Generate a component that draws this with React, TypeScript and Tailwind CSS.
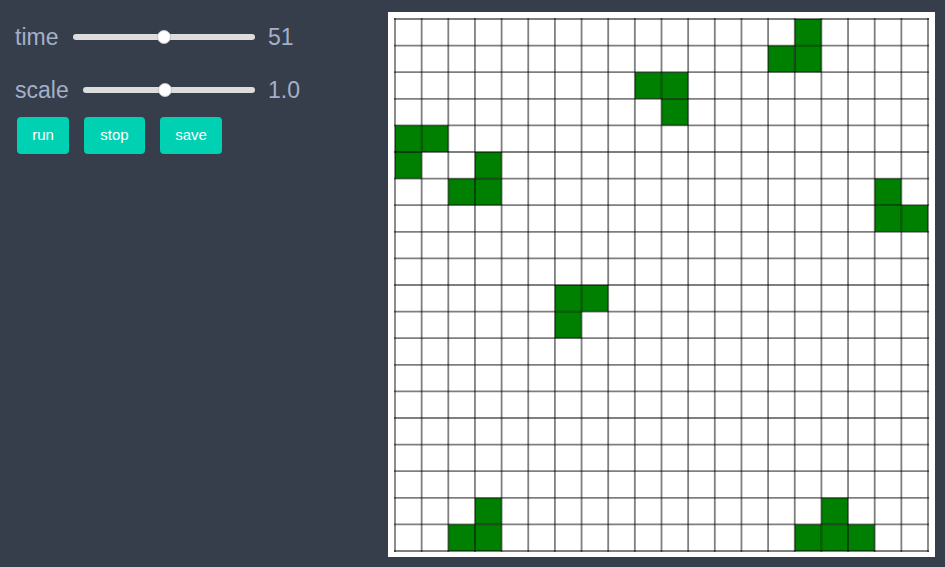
import React from "react";

const ON: [number, number][] = [
  [0, 15],
  [1, 14], [1, 15],
  [2, 9], [2, 10],
  [3, 10],
  [4, 0], [4, 1],
  [5, 0], [5, 3],
  [6, 2], [6, 3], [6, 18],
  [7, 18], [7, 19],
  [10, 6], [10, 7],
  [11, 6],
  [18, 3], [18, 16],
  [19, 2], [19, 3], [19, 15], [19, 16], [19, 17],
];

function Slider({ pct }: { pct: number }) {
  return (
    <div className="relative flex-1 h-[14px] flex items-center">
      <div className="w-full h-[6px] rounded-full bg-[#dddddd]" />
      <div
        className="absolute top-[0px] w-[14px] h-[14px] rounded-full bg-white border border-[#c4c4c4]"
        style={{ left: `calc(${pct * 100}% - ${pct * 14}px)` }}
      />
    </div>
  );
}

function Grid() {
  const W = 533;
  const H = 532;
  const cw = W / 20;
  const ch = H / 20;
  const lines: React.ReactNode[] = [];
  for (let i = 0; i <= 20; i++) {
    const x = i * cw + 1;
    const y = i * ch + 1;
    lines.push(<line key={"v" + i} x1={x} y1={0} x2={x} y2={H + 2} stroke="#000" strokeOpacity={0.5} strokeWidth={1.8} />);
    lines.push(<line key={"h" + i} x1={0} y1={y} x2={W + 2} y2={y} stroke="#000" strokeOpacity={0.5} strokeWidth={1.8} />);
  }
  return (
    <svg width={W + 2} height={H + 2} viewBox={`0 0 ${W + 2} ${H + 2}`} className="block">
      {ON.map(([r, c]) => (
        <rect key={r + "-" + c} x={c * cw + 1} y={r * ch + 1} width={cw} height={ch} fill="#008000" />
      ))}
      {lines}
    </svg>
  );
}

export default function App() {
  return (
    <div className="w-[945px] h-[567px] bg-[#373e4b] flex overflow-hidden" style={{ fontFamily: '"Liberation Sans", Arial, sans-serif' }}>
      <div className="w-[388px] shrink-0 pl-[15px] pt-[20px]">
        <div className="w-[278px] flex items-center h-[34px] text-[23px] text-[#a3b0c9]">
          <span>time</span>
          <div className="ml-[15px] flex-1 flex"><Slider pct={0.5} /></div>
          <span className="ml-[13px] w-[25px]">51</span>
        </div>
        <div className="w-[278px] mt-[19px] flex items-center h-[34px] text-[23px] text-[#a3b0c9]">
          <span>scale</span>
          <div className="ml-[14px] flex-1 flex"><Slider pct={0.475} /></div>
          <span className="ml-[13px] w-[25px] whitespace-nowrap">1.0</span>
        </div>
        <div className="mt-[10px] ml-[2px] flex gap-[15px]">
          <button className="w-[52px] h-[37px] rounded-[4px] bg-[#00d1b2] text-white text-[15px]">run</button>
          <button className="w-[61px] h-[37px] rounded-[4px] bg-[#00d1b2] text-white text-[15px]">stop</button>
          <button className="w-[62px] h-[37px] rounded-[4px] bg-[#00d1b2] text-white text-[15px]">save</button>
        </div>
      </div>
      <div className="mt-[12px] w-[547px] h-[545px] bg-white pl-[6px] pt-[6px]">
        <Grid />
      </div>
    </div>
  );
}
